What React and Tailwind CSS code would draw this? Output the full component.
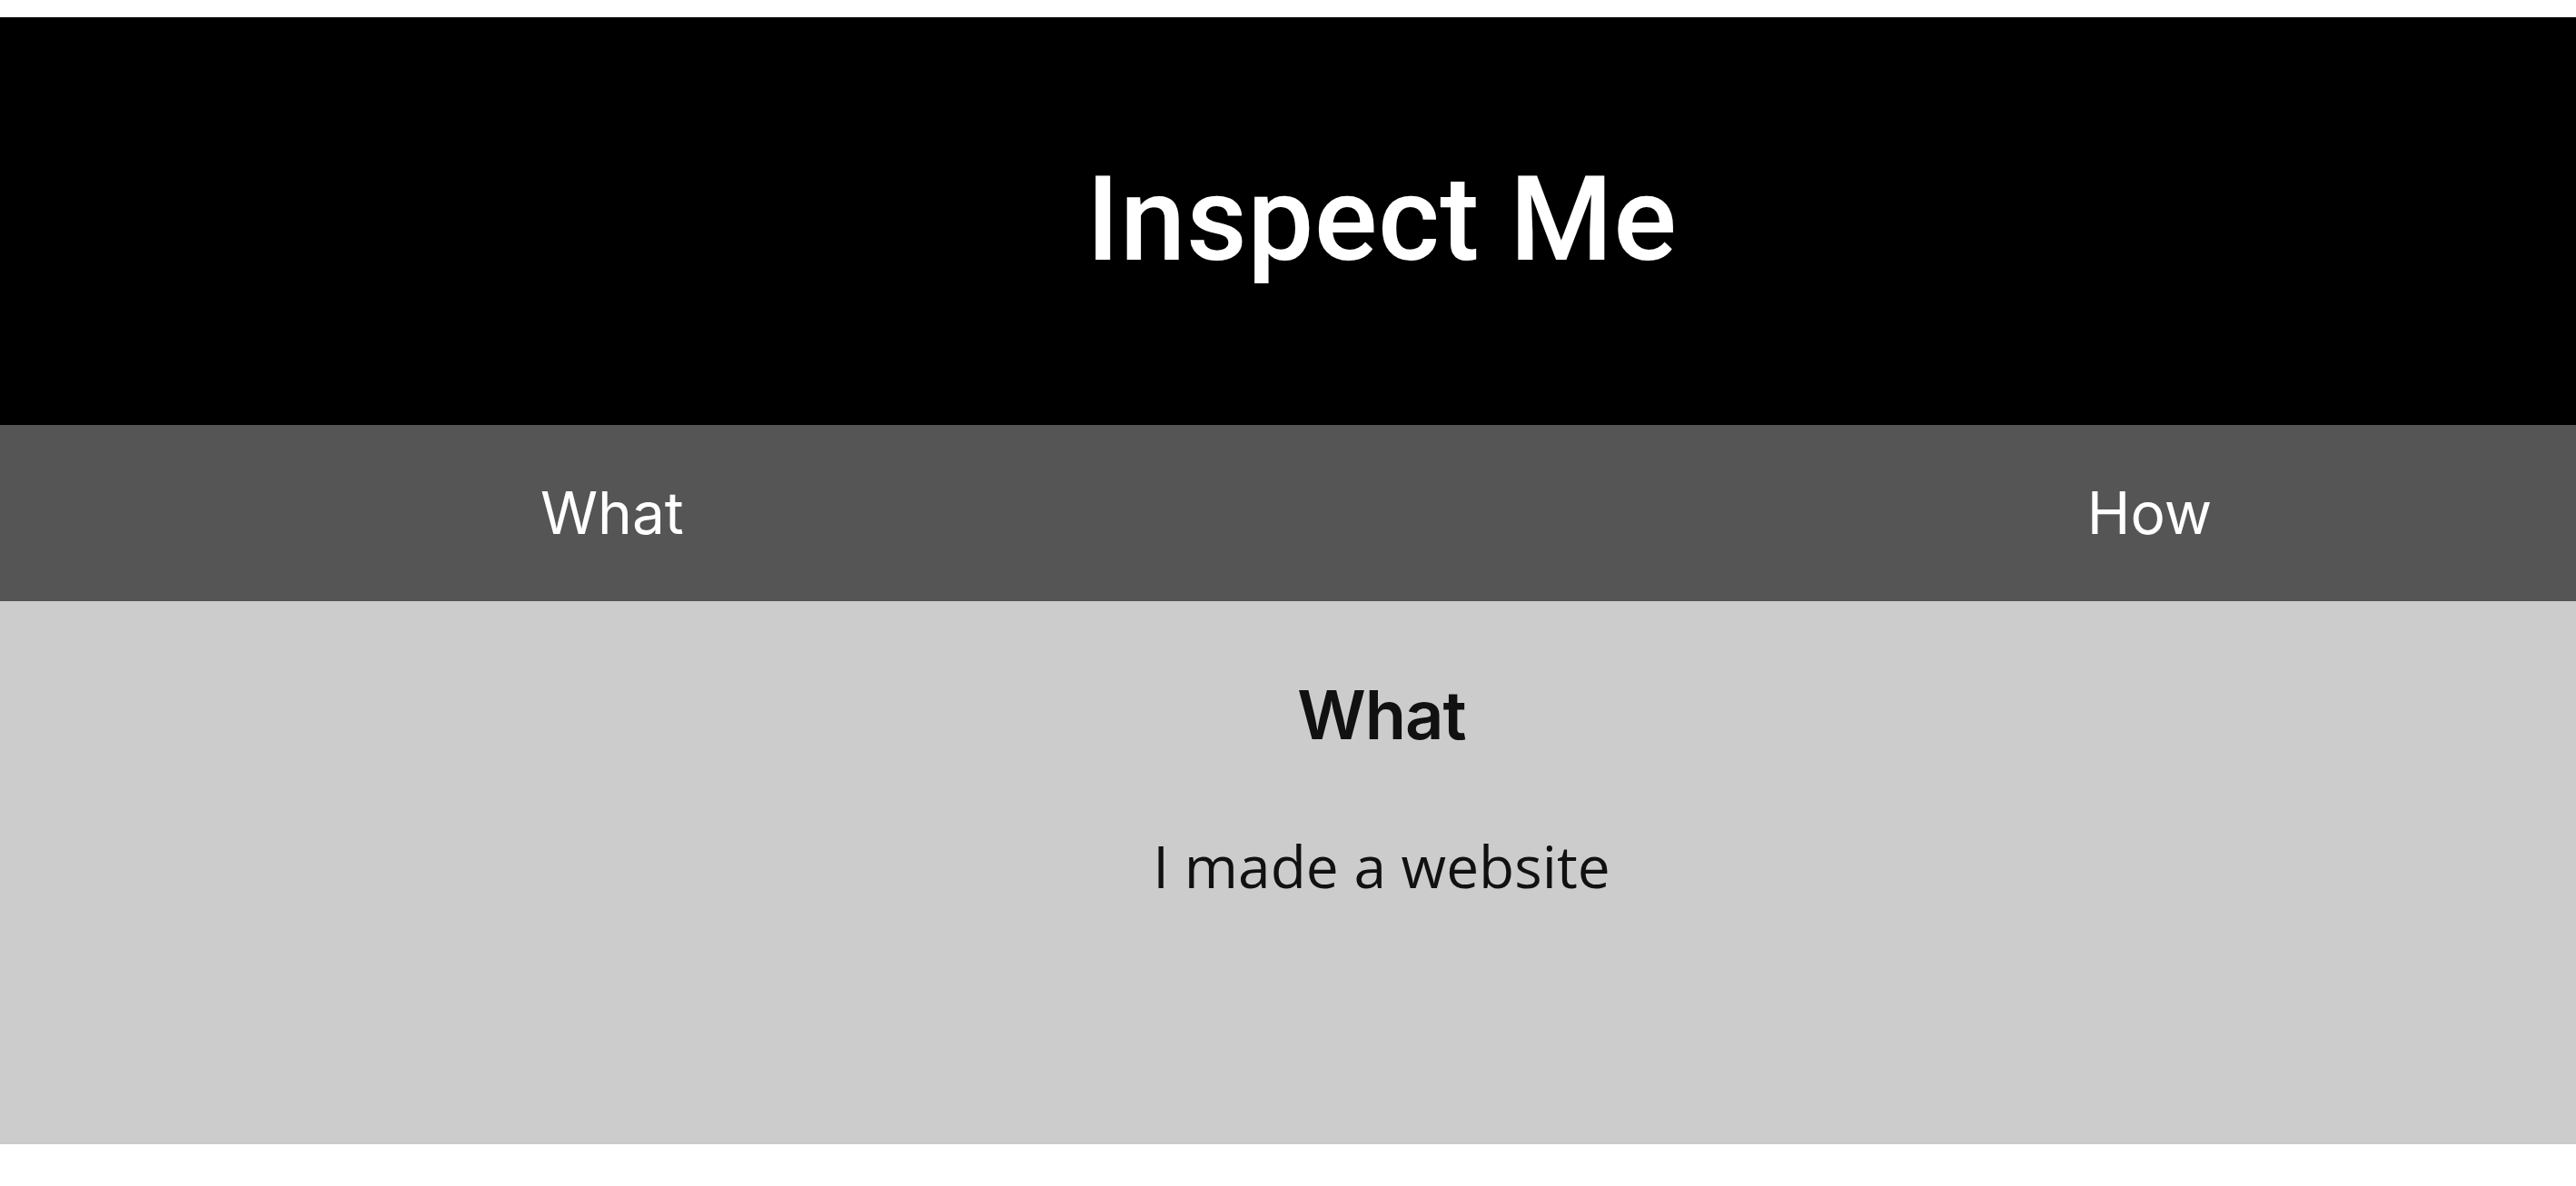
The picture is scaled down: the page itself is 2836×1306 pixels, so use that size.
export default function App() {
  return (
    <div className="w-full h-[1306px] bg-white pt-[19px]">
      <header className="h-[449px] bg-black flex items-center justify-center pl-[206px]">
        <h1 className="text-white text-[130px] leading-none font-['Roboto',sans-serif] font-medium tracking-[0.5px] -mt-[4px]">
          Inspect Me
        </h1>
      </header>

      <nav className="h-[194px] bg-[#555555] flex items-center justify-between pl-[595px] pr-[401px] font-['Inter',sans-serif] text-white text-[64px]">
        <a className="leading-none">What</a>
        <a className="leading-none">How</a>
      </nav>

      <main className="h-[598px] bg-[#cccccc] flex flex-col items-center pl-[206px] pt-[88px] text-[#111111]">
        <h2 className="font-['Inter',sans-serif] font-semibold text-[74px] tracking-[-1px] leading-none">What</h2>
        <p className="mt-[98px] font-['Open_Sans',sans-serif] text-[64px] leading-none">I made a website</p>
      </main>
    </div>
  );
}
